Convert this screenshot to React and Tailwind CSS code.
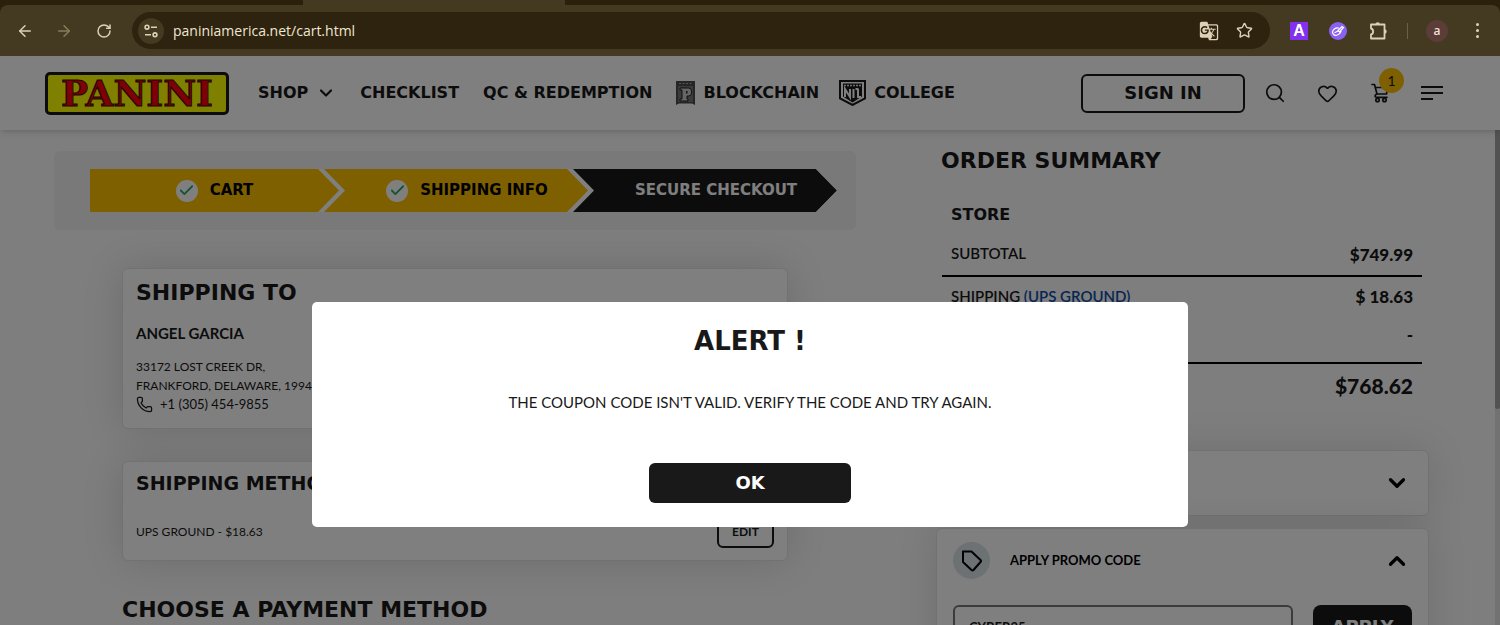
import React, { useState } from 'react';
import { ArrowLeft, ArrowRight, Check, ChevronDown, ChevronUp, Heart, Phone, RotateCw, Search, Star } from 'lucide-react';
import { MdGTranslate } from 'react-icons/md';

const DISPLAY = "font-['DejaVu_Sans',sans-serif] font-bold text-[#191919]";

function SiteSettingsIcon() {
  return (
    <svg width="14" height="14" viewBox="0 0 14 14" fill="none" stroke="currentColor" strokeWidth="1.6" aria-hidden="true">
      <circle cx="3" cy="3.2" r="1.9" />
      <path d="M7 3.2h6M1 10.8h6" />
      <circle cx="11" cy="10.8" r="1.9" />
    </svg>
  );
}

function PuzzleIcon() {
  return (
    <svg width="20" height="20" viewBox="0 0 20 20" fill="none" stroke="currentColor" strokeWidth="1.8" strokeLinejoin="round" aria-hidden="true">
      <path d="M2 3.500H15.500V17.500H2V13.500C4.800 13 4.800 8 2 7.500Z" />
      <path d="M6.500 3.500a2.200 2.200 0 0 1 4.400 0zM15.500 8.300a2.200 2.200 0 0 1 0 4.400z" fill="currentColor" stroke="none" />
    </svg>
  );
}

function LinkBadgeIcon() {
  return (
    <svg width="18" height="18" viewBox="0 0 18 18" fill="none" aria-hidden="true">
      <circle cx="9" cy="9" r="9" fill="#8b62f0" />
      <path d="M3.500 10.500c0-3 3-5 6-4.500M4.500 12.500c2 2 6 .5 7.500-3M6 10.500l3-1.500M9 8.500l4-4 1.500 1-4 4.500zM3.500 10.500l1 2" stroke="#fff" strokeWidth="1.200" strokeLinecap="round" />
    </svg>
  );
}

function CartIcon() {
  return (
    <svg width="18" height="20" viewBox="0 0 18 20" fill="none" stroke="currentColor" strokeWidth="1.700" strokeLinecap="round" strokeLinejoin="round" aria-hidden="true">
      <path d="M1 1.500h2.500L6 11h9.500l1-6M4.200 4.500H16M6 11c-2 .5-2.800 3-.5 3.300H16" />
      <circle cx="6.500" cy="17" r="1.700" />
      <circle cx="13.500" cy="17" r="1.700" />
    </svg>
  );
}

function TagIcon() {
  return (
    <svg width="22" height="24" viewBox="0 0 22 24" fill="none" stroke="currentColor" strokeWidth="2" strokeLinejoin="round" aria-hidden="true">
      <path d="M2 2.500h8.500L19.500 11q1 1 0 2l-7 8q-1 1-2 0L2 13z" />
    </svg>
  );
}

function BlockchainIcon() {
  return (
    <svg width="19" height="24" viewBox="0 0 19 24" aria-hidden="true">
      <path d="M0 0h19v24l-3-1.500H3L0 24z" fill="#4d4d4d" />
      <path d="M2 5h15v16H2z" fill="#777" />
      <path d="M3 2.500h13" stroke="#aaa" strokeDasharray="2 1.500" />
      <path d="M4 7h8.500q3 0 3 3v2q0 3-3 3H11v3h1v2H4v-2h2V9H4z" fill="#ccc" stroke="#222" />
      <path d="M10 10h1.500v2.500H10z" fill="#222" />
    </svg>
  );
}

function ShieldIcon() {
  return (
    <svg width="27" height="26" viewBox="0 0 27 26" aria-hidden="true">
      <path d="M1 1h25v17.500L13.500 25 1 18.500z" fill="none" stroke="#191919" strokeWidth="2" />
      <path d="M4 3.500h19v13l-9.500 6-9.500-6z" fill="#191919" />
      <path d="M5 5.500h17" stroke="#ddd" strokeWidth="1.500" strokeDasharray="2 1" />
      <path d="M6 17V9l5 8V9M14.500 9v9M16.500 9h3M19 9v8h3" fill="none" stroke="#fff" strokeWidth="2" />
    </svg>
  );
}

function BrowserBar() {
  return (
    <div className="bg-[#2a200c] font-['Open_Sans',sans-serif]">
      <div className="ml-[303px] h-[5px] w-[262px] bg-[#443a21]" />
      <div className="flex h-[51px] items-center rounded-t-lg bg-[#443a21] pr-5 pl-4 text-[#ddd2b8]">
        <button type="button" aria-label="Back" className="w-[18px]"><ArrowLeft size={18} /></button>
        <button type="button" aria-label="Forward" className="ml-[21px] w-[18px] text-[#887c5c]"><ArrowRight size={18} /></button>
        <button type="button" aria-label="Reload" className="ml-[23px] w-4"><RotateCw size={16} strokeWidth={2.200} /></button>
        <div className="ml-5 flex h-[37px] flex-1 items-center rounded-full bg-[#2d230e] pr-[17px] pl-[6px]">
          <span className="flex h-[26px] w-[26px] items-center justify-center rounded-full bg-[#443a21]">
            <SiteSettingsIcon />
          </span>
          <input
            aria-label="Address"
            className="ml-[9px] min-w-0 flex-1 bg-transparent text-sm text-[#efe6d2] outline-none"
            defaultValue="paniniamerica.net/cart.html"
          />
          <button type="button" aria-label="Translate"><MdGTranslate size={20} /></button>
          <button type="button" aria-label="Bookmark" className="ml-[17px]"><Star size={17} /></button>
        </div>
        <button type="button" className="ml-5 h-[18px] w-[18px] bg-[#8430f0] font-['Liberation_Sans',sans-serif] text-base leading-[18px] font-bold text-white">A</button>
        <button type="button" aria-label="Link extension" className="ml-[21px]"><LinkBadgeIcon /></button>
        <button type="button" aria-label="Extensions" className="ml-[22px]"><PuzzleIcon /></button>
        <span className="ml-[18px] h-4 w-px bg-[#6b6043]" />
        <button type="button" className="ml-[18px] h-[22px] w-[22px] rounded-full bg-[#5c3d38] text-xs leading-[22px] font-semibold text-[#efe0dc]">a</button>
        <button type="button" aria-label="Menu" className="ml-[26px] flex w-[6px] flex-col items-center gap-[3px]">
          <span className="h-[3px] w-[3px] rounded-full bg-[#ddd2b8]" />
          <span className="h-[3px] w-[3px] rounded-full bg-[#ddd2b8]" />
          <span className="h-[3px] w-[3px] rounded-full bg-[#ddd2b8]" />
        </button>
      </div>
    </div>
  );
}

function SiteHeader() {
  return (
    <header className="relative flex h-[74px] shrink-0 items-center bg-white pr-[57px] pl-[45px] shadow-md">
      <a href="#home" className="flex h-[43px] w-[184px] items-center justify-center rounded-[5px] border-[3px] border-[#191919] bg-[#ffff00] font-['DejaVu_Serif',serif] text-[36px] leading-none font-bold text-[#ff0010] [-webkit-text-stroke:1px_#301000]">
        PANINI
      </a>
      <nav className={`ml-[29px] flex items-center gap-6 text-base whitespace-nowrap ${DISPLAY}`}>
        <a href="#shop" className="flex items-center gap-2">
          SHOP <ChevronDown size={20} strokeWidth={2.600} />
        </a>
        <a href="#checklist">CHECKLIST</a>
        <a href="#redemption">QC &amp; REDEMPTION</a>
        <a href="#blockchain" className="flex items-center gap-2"><BlockchainIcon />BLOCKCHAIN</a>
        <a href="#college" className="-ml-1 flex items-center gap-2"><ShieldIcon />COLLEGE</a>
      </nav>
      <div className="ml-auto flex items-center text-[#191919]">
        <button type="button" className={`h-[39px] w-[164px] rounded-md border-2 border-[#191919] text-lg leading-none ${DISPLAY}`}>
          SIGN IN
        </button>
        <button type="button" aria-label="Search" className="ml-[19px]"><Search size={22} strokeWidth={1.900} /></button>
        <button type="button" aria-label="Wishlist" className="ml-[31px]"><Heart size={21} strokeWidth={1.900} /></button>
        <button type="button" aria-label="Cart" className="relative ml-[33px]">
          <CartIcon />
          <span className="absolute -top-[15px] left-[8px] h-[25px] w-[25px] rounded-full bg-[#ffc000] font-['Lato',sans-serif] text-sm leading-[25px]">1</span>
        </button>
        <button type="button" aria-label="Open menu" className="ml-8 flex w-[22px] flex-col gap-1">
          <span className="h-[2px] bg-[#191919]" />
          <span className="h-[2px] bg-[#191919]" />
          <span className="h-[2px] w-3 bg-[#191919]" />
        </button>
      </div>
    </header>
  );
}

function StepCheck() {
  return (
    <span className="flex h-[22px] w-[22px] items-center justify-center rounded-full bg-white">
      <Check size={17} strokeWidth={2.500} className="text-[#2fa764]" />
    </span>
  );
}

function Steps() {
  return (
    <div className="rounded-md bg-[#f2f2f2] py-[18px] pr-[19px] pl-9">
      <ol className="grid h-[43px] grid-cols-3 bg-white font-['DejaVu_Sans',sans-serif] text-[15px] font-bold whitespace-nowrap text-black [clip-path:polygon(0_0,calc(100%_-_21px)_0,100%_50%,calc(100%_-_21px)_100%,0_100%)]">
        <li className="flex items-center justify-center gap-3 bg-[#ffc000] [clip-path:polygon(0_0,calc(100%_-_21px)_0,100%_50%,calc(100%_-_21px)_100%,0_100%)]">
          <StepCheck />CART
        </li>
        <li className="-ml-[15px] flex items-center justify-center gap-3 bg-[#ffc000] pl-[22px] [clip-path:polygon(0_0,calc(100%_-_21px)_0,100%_50%,calc(100%_-_21px)_100%,0_100%,21px_50%)]">
          <StepCheck />SHIPPING INFO
        </li>
        <li className="-ml-[15px] flex items-center justify-center bg-[#191919] pl-[22px] text-white [clip-path:polygon(0_0,calc(100%_-_21px)_0,100%_50%,calc(100%_-_21px)_100%,0_100%,21px_50%)]">
          SECURE CHECKOUT
        </li>
      </ol>
    </div>
  );
}

function CheckoutColumn() {
  return (
    <div>
      <Steps />
      <div className="mr-[68px] ml-[68px] text-[#191919]">
        <section className="mt-[38px] h-[161px] rounded-md border border-[#e4e4e4] bg-white px-[13px] pt-3 text-xs leading-[19px] shadow-[0_0_40px_rgba(0,0,0,0.14)]">
          <h2 className={`text-[22px] leading-6 ${DISPLAY}`}>SHIPPING TO</h2>
          <p className="mt-[18px] mb-[14px] text-[15px] leading-5 font-bold">ANGEL GARCIA</p>
          <p>33172 LOST CREEK DR,</p>
          <p>FRANKFORD, DELAWARE, 19945</p>
          <p className="flex items-center gap-[7px] text-[13px]"><Phone size={17} strokeWidth={1.800} />+1 (305) 454-9855</p>
        </section>
        <section className="mt-8 h-[100px] rounded-md border border-[#e4e4e4] bg-white px-[13px] pt-[9px] shadow-[0_0_40px_rgba(0,0,0,0.14)]">
          <h2 className={`text-[19px] leading-6 ${DISPLAY}`}>SHIPPING METHOD</h2>
          <div className="mt-5 flex items-center justify-between text-xs">
            <span>UPS GROUND - $18.63</span>
            <button type="button" className="h-[33px] w-[57px] rounded-md border-2 border-[#191919] font-bold">EDIT</button>
          </div>
        </section>
        <h2 className={`mt-[37px] text-[22px] leading-6 whitespace-nowrap ${DISPLAY}`}>CHOOSE A PAYMENT METHOD</h2>
      </div>
    </div>
  );
}

function OrderSummary() {
  const [code, setCode] = useState('CYBER25');

  return (
    <div className="text-[#191919]">
      <h2 className={`-mt-[2px] ml-[5px] text-[22px] leading-6 ${DISPLAY}`}>ORDER SUMMARY</h2>
      <h3 className={`mt-[30px] ml-[15px] text-base leading-6 ${DISPLAY}`}>STORE</h3>
      <div className="mr-[7px] ml-[6px]">
        <table className="w-full border-collapse text-[15px]">
          <tbody>
            <tr className="h-[49px] border-b-2 border-black">
              <th scope="row" className="pt-1 pl-[9px] text-left font-semibold">SUBTOTAL</th>
              <td className="pt-2 pr-[9px] text-right text-[17px] font-black">$749.99</td>
            </tr>
            <tr className="h-10">
              <th scope="row" className="pl-[9px] text-left font-semibold">
                SHIPPING <a href="#rates" className="text-[#0b4da8]">(UPS GROUND)</a>
              </th>
              <td className="pr-[9px] text-right text-[17px] font-black">$ 18.63</td>
            </tr>
            <tr className="h-[47px] border-b-2 border-black">
              <th scope="row" className="pl-[9px] text-left font-semibold">TAX</th>
              <td className="pr-[9px] pb-2 text-right text-[17px] font-black">-</td>
            </tr>
            <tr className="h-[44px]">
              <th scope="row" className="pl-[9px] text-left font-semibold">TOTAL</th>
              <td className="pr-[9px] text-right text-[21px] font-black">$768.62</td>
            </tr>
          </tbody>
        </table>
      </div>

      <section className="mt-[43px] rounded-md border border-[#e4e4e4] bg-white shadow-[0_0_40px_rgba(0,0,0,0.12)]">
        <button type="button" aria-label="Apply gift card" className="flex h-16 w-full items-center justify-end pr-[18px] text-black">
          <ChevronDown size={26} strokeWidth={3} />
        </button>
      </section>

      <section className="mt-3 h-[150px] rounded-md border border-[#e4e4e4] bg-white px-4 shadow-[0_0_40px_rgba(0,0,0,0.12)]">
        <button type="button" className="flex h-[63px] w-full items-center pr-[2px] text-[13px] font-bold text-black">
          <span className="flex h-[37px] w-[37px] items-center justify-center rounded-full bg-[#d9e2e6]">
            <TagIcon />
          </span>
          <span className="ml-5">APPLY PROMO CODE</span>
          <ChevronUp size={26} strokeWidth={3} className="ml-auto" />
        </button>
        <div className="mt-[13px] flex gap-5">
          <input
            aria-label="Promo code"
            value={code}
            onChange={(e) => setCode(e.target.value)}
            className="h-[43px] min-w-0 flex-1 rounded-md border-2 border-[#77777c] bg-white px-[14px] text-[13px] font-bold"
          />
          <button type="button" className="h-[43px] w-[99px] rounded-lg bg-[#191919] font-['DejaVu_Sans',sans-serif] text-lg font-bold text-white">
            APPLY
          </button>
        </div>
      </section>
    </div>
  );
}

function AlertDialog({ onClose }) {
  return (
    <div className="absolute inset-0 flex items-start justify-center bg-black/50 pt-[246px]">
      <div role="alertdialog" aria-labelledby="alert-title" className="flex w-full max-w-[876px] flex-col items-center rounded-[5px] bg-white pt-[23px] pb-6 text-[#191919]">
        <h2 id="alert-title" className={`text-[26px] leading-8 ${DISPLAY}`}>ALERT !</h2>
        <p className="mt-[33px] text-[15px] leading-6">THE COUPON CODE ISN&apos;T VALID. VERIFY THE CODE AND TRY AGAIN.</p>
        <button
          type="button"
          onClick={onClose}
          className="mt-[49px] h-10 w-[202px] rounded-md bg-[#191919] font-['DejaVu_Sans',sans-serif] text-lg leading-none font-bold text-white"
        >
          OK
        </button>
      </div>
    </div>
  );
}

export default function App() {
  const [alertOpen, setAlertOpen] = useState(true);

  return (
    <div className="flex h-screen flex-col overflow-hidden">
      <BrowserBar />
      <div className="relative flex min-h-0 flex-1 flex-col overflow-hidden bg-white font-['Lato',sans-serif]">
        <SiteHeader />
        <div className="flex min-h-0 flex-1 bg-[#fcfcfc]">
          <main className="grid flex-1 grid-cols-[1fr_493px] items-start gap-20 pt-[21px] pr-[66px] pl-[54px]">
            <CheckoutColumn />
            <OrderSummary />
          </main>
          {/* scroll track */}
          <div className="w-[5px] bg-[#e4e4e4]">
            <div className="h-[279px] rounded-b-sm bg-[#a5a5a5]" />
          </div>
        </div>
        {alertOpen && <AlertDialog onClose={() => setAlertOpen(false)} />}
      </div>
    </div>
  );
}
